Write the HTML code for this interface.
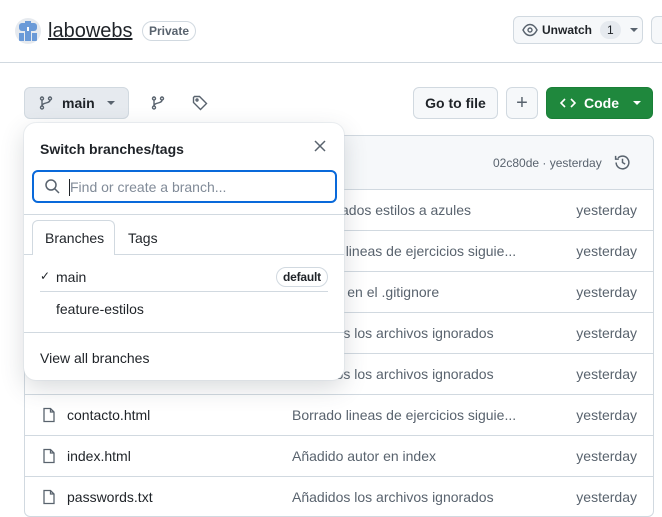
<!DOCTYPE html>
<html><head><meta charset="utf-8"><style>
*{box-sizing:border-box;margin:0;padding:0}
body{width:662px;height:517px;overflow:hidden;background:#fff;font-family:"Liberation Sans",sans-serif;color:#1f2328;position:relative;font-size:14px}
.abs{position:absolute}
.btn{position:absolute;border:1px solid #d1d9e0;background:#f6f8fa;border-radius:6px;display:flex;align-items:center;font-weight:bold;font-size:14px}
.row{position:absolute;left:24px;width:630px;height:41px;border-top:1px solid #d1d9e0;font-size:14px}
.row .n{position:absolute;left:43px;top:12px}
.row .m{position:absolute;left:268px;top:12px;color:#59636e}
.row .d{position:absolute;right:17px;top:12px;color:#59636e}
.row svg{position:absolute;left:17px;top:12px}
.car{display:inline-block;width:0;height:0;border-left:4px solid transparent;border-right:4px solid transparent;border-top:4px solid #59636e}
</style></head><body>
<div class="abs" style="left:15px;top:18px;width:26px;height:26px;border-radius:50%;background:#e6eaef;overflow:hidden">
<svg width="26" height="26" viewBox="0 0 26 26"><rect x="4" y="5" width="18" height="8" rx="3" fill="#6a9ad8"/><rect x="10" y="3" width="6" height="20" fill="#6a9ad8"/><rect x="4" y="15" width="5" height="8" fill="#6a9ad8"/><rect x="17" y="15" width="5" height="8" fill="#6a9ad8"/><rect x="12" y="9" width="2" height="4" fill="#fff"/></svg></div>
<div class="abs" style="left:48px;top:20px;font-size:20px;text-decoration:underline;color:#1f2328">labowebs</div>
<div class="abs" style="left:142px;top:21px;border:1px solid #d1d9e0;border-radius:12px;padding:2px 6px;font-size:12px;color:#59636e;font-weight:bold">Private</div>
<div class="btn" style="left:513px;top:16px;width:130px;height:28px;font-size:12px;padding-left:8px">
<svg width="16" height="16" viewBox="0 0 16 16" fill="none" stroke="#59636e" stroke-width="1.4"><path d="M1 8c2-4 4-5.5 7-5.5S13 4 15 8c-2 4-4 5.5-7 5.5S3 12 1 8z"/><circle cx="8" cy="8" r="2"/></svg>
<span style="margin-left:4px">Unwatch</span><span style="margin-left:8px;background:#e6eaef;border-radius:10px;padding:2px 7px;font-weight:normal">1</span><span class="car" style="margin-left:9px"></span></div>
<div class="btn" style="left:651px;top:16px;width:20px;height:28px"></div>
<div class="abs" style="left:0;top:62px;width:662px;height:1px;background:#d1d9e0"></div>
<div class="btn" style="left:24px;top:87px;width:105px;height:32px;background:#e6eaef;padding-left:13px">
<svg width="16" height="16" viewBox="0 0 16 16" fill="none" stroke="#59636e" stroke-width="1.4"><circle cx="4" cy="3.5" r="1.5"/><circle cx="4" cy="12.5" r="1.5"/><circle cx="12" cy="3.5" r="1.5"/><path d="M4 5v6M12 5c0 4-8 2-8 6"/></svg>
<span style="margin-left:8px">main</span><span class="car" style="margin-left:12px"></span></div>
<svg class="abs" style="left:150px;top:95px" width="16" height="16" viewBox="0 0 16 16" fill="none" stroke="#59636e" stroke-width="1.4"><circle cx="4" cy="3.5" r="1.5"/><circle cx="4" cy="12.5" r="1.5"/><circle cx="12" cy="3.5" r="1.5"/><path d="M4 5v6M12 5c0 4-8 2-8 6"/></svg>
<svg class="abs" style="left:192px;top:95px" width="16" height="16" viewBox="0 0 16 16" fill="none" stroke="#59636e" stroke-width="1.4"><path d="M1.5 2.5v5l7 7 6-6-7-7h-5z"/><circle cx="5" cy="5" r="1"/></svg>
<div class="btn" style="left:413px;top:87px;width:85px;height:32px;justify-content:center">Go to file</div>
<div class="btn" style="left:506px;top:87px;width:32px;height:32px;justify-content:center;font-weight:normal;font-size:20px;color:#59636e">+</div>
<div class="btn" style="left:546px;top:87px;width:107px;height:32px;background:#1f883d;border-color:#1a7f37;color:#fff;padding-left:13px">
<svg width="16" height="16" viewBox="0 0 16 16" fill="none" stroke="#fff" stroke-width="1.6"><path d="M5 4L1 8l4 4M11 4l4 4-4 4"/></svg><span style="margin-left:8px">Code</span><span class="car" style="margin-left:14px;border-top-color:#fff"></span></div>
<div class="abs" style="left:24px;top:135px;width:630px;height:382px;border:1px solid #d1d9e0;border-radius:6px"></div>
<div class="abs" style="left:25px;top:136px;width:628px;height:53px;background:#f6f8fa;border-radius:6px 6px 0 0"></div>
<div class="abs" style="left:493px;top:156px;font-size:12px;color:#59636e">02c80de · yesterday</div>
<svg class="abs" style="left:614px;top:154px" width="17" height="17" viewBox="0 0 16 16" fill="none" stroke="#59636e" stroke-width="1.4"><path d="M2 8a6 6 0 1 0 1.8-4.3M1.5 1.8v3h3"/><path d="M8 4.5V8l2.5 1.5"/></svg>
<div class="row" style="top:189px"><span class="m">Actualizados estilos a azules</span><span class="d">yesterday</span></div>
<div class="row" style="top:230px"><span class="m">Borrado lineas de ejercicios siguie...</span><span class="d">yesterday</span></div>
<div class="row" style="top:271px"><span class="m">Añadido en el .gitignore</span><span class="d">yesterday</span></div>
<div class="row" style="top:312px"><span class="m">Añadidos los archivos ignorados</span><span class="d">yesterday</span></div>
<div class="row" style="top:353px"><span class="m">Añadidos los archivos ignorados</span><span class="d">yesterday</span></div>
<div class="row" style="top:394px"><svg width="16" height="16" viewBox="0 0 16 16" fill="none" stroke="#59636e" stroke-width="1.3"><path d="M3 1.5h6.5l3.5 3.5v9.5H3z M9.5 1.5V5H13"/></svg><span class="n">contacto.html</span><span class="m">Borrado lineas de ejercicios siguie...</span><span class="d">yesterday</span></div>
<div class="row" style="top:435px"><svg width="16" height="16" viewBox="0 0 16 16" fill="none" stroke="#59636e" stroke-width="1.3"><path d="M3 1.5h6.5l3.5 3.5v9.5H3z M9.5 1.5V5H13"/></svg><span class="n">index.html</span><span class="m">Añadido autor en index</span><span class="d">yesterday</span></div>
<div class="row" style="top:476px"><svg width="16" height="16" viewBox="0 0 16 16" fill="none" stroke="#59636e" stroke-width="1.3"><path d="M3 1.5h6.5l3.5 3.5v9.5H3z M9.5 1.5V5H13"/></svg><span class="n">passwords.txt</span><span class="m">Añadidos los archivos ignorados</span><span class="d">yesterday</span></div>
<div class="abs" style="left:24px;top:123px;width:320px;height:257px;background:#fff;border-radius:12px;box-shadow:0 0 0 1px #d1d9e066,0 8px 24px rgba(66,74,83,.2)">
<div class="abs" style="left:16px;top:18px;font-weight:bold;font-size:14px">Switch branches/tags</div>
<svg class="abs" style="left:290px;top:17px" width="12" height="12" viewBox="0 0 12 12" stroke="#59636e" stroke-width="1.5"><path d="M1 1l10 10M11 1L1 11"/></svg>
<div class="abs" style="left:8px;top:47px;width:305px;height:33px;border:2px solid #0969da;border-radius:6px"></div>
<svg class="abs" style="left:20px;top:55px" width="16" height="16" viewBox="0 0 16 16" fill="none" stroke="#59636e" stroke-width="1.5"><circle cx="7" cy="7" r="5"/><path d="M10.5 10.5L15 15"/></svg>
<div class="abs" style="left:45px;top:56px;width:1px;height:17px;background:#1f2328"></div>
<div class="abs" style="left:46px;top:56px;color:#818b98">Find or create a branch...</div>
<div class="abs" style="left:0;top:91px;width:320px;height:1px;background:#d1d9e0"></div>
<div class="abs" style="left:8px;top:97px;width:83px;height:35px;border:1px solid #d1d9e0;border-bottom:none;border-radius:6px 6px 0 0;background:#fff"></div>
<div class="abs" style="left:21px;top:107px">Branches</div>
<div class="abs" style="left:104px;top:107px">Tags</div>
<div class="abs" style="left:0;top:131px;width:8px;height:1px;background:#d1d9e0"></div>
<div class="abs" style="left:91px;top:131px;width:229px;height:1px;background:#d1d9e0"></div>
<div class="abs" style="left:16px;top:146px;font-size:12px">✓</div>
<div class="abs" style="left:32px;top:146px">main</div>
<div class="abs" style="left:252px;top:144px;border:1px solid #d1d9e0;border-radius:12px;padding:2px 6px;font-size:12px;font-weight:bold;color:#1f2328;letter-spacing:-0.2px">default</div>
<div class="abs" style="left:16px;top:168px;width:288px;height:1px;background:#d1d9e0"></div>
<div class="abs" style="left:32px;top:178px">feature-estilos</div>
<div class="abs" style="left:0;top:209px;width:320px;height:1px;background:#d1d9e0"></div>
<div class="abs" style="left:16px;top:227px">View all branches</div>
</div>
</body></html>
